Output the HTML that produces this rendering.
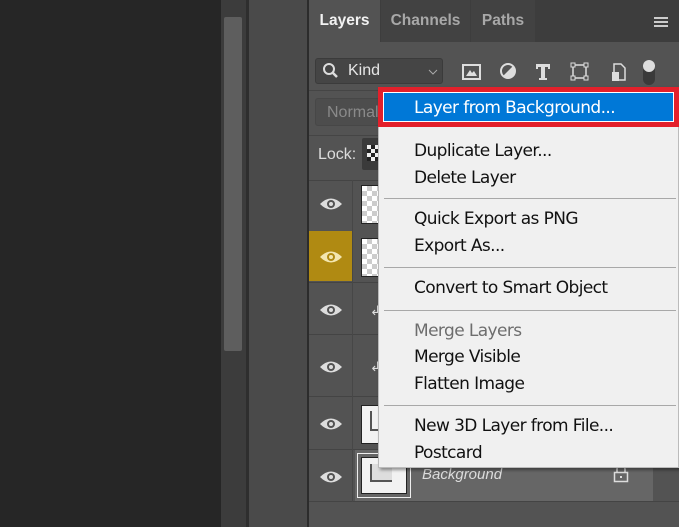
<!DOCTYPE html>
<html><head><style>
*{margin:0;padding:0;box-sizing:border-box}
body{width:679px;height:527px;overflow:hidden;background:#262626;position:relative;font-family:"Liberation Sans",sans-serif}
.a{position:absolute}
.tab{position:absolute;top:0;height:42px;font-weight:bold;font-size:15.5px;line-height:42px;text-align:center}
.mi{position:absolute;left:414px;font-size:17px;color:#111;line-height:20px;font-family:"DejaVu Sans","Liberation Sans",sans-serif;letter-spacing:-0.6px}
.sep{position:absolute;left:384px;width:292px;height:1px;background:#a8a8a8}
.row{position:absolute;left:309px;width:370px;border-top:1px solid #444}
.eyec{position:absolute;left:309px;width:44px;border-right:1px solid #474747}
.chk{position:absolute;background-color:#fff;background-image:linear-gradient(45deg,#ccc 25%,transparent 25%,transparent 75%,#ccc 75%),linear-gradient(45deg,#ccc 25%,transparent 25%,transparent 75%,#ccc 75%);background-size:10px 10px;background-position:0 0,5px 5px;border:1px solid #222}
</style></head><body>
<div class="a" style="left:221px;top:0;width:25px;height:527px;background:#3c3c3c"></div>
<div class="a" style="left:224px;top:17px;width:18px;height:334px;background:#5e5e5e;border-radius:2px"></div>
<div class="a" style="left:246px;top:0;width:3px;height:527px;background:#2e2e2e"></div>
<div class="a" style="left:249px;top:0;width:58px;height:527px;background:#4a4a4a"></div>
<div class="a" style="left:307px;top:0;width:2px;height:527px;background:#2c2c2c"></div>
<div class="a" style="left:309px;top:0;width:370px;height:527px;background:#535353"></div>
<div class="a" style="left:309px;top:0;width:370px;height:42px;background:#3d3d3d"></div>
<div class="tab" style="left:309px;width:71px;background:#535353;color:#f2f2f2">Layers</div>
<div class="tab" style="left:381px;width:89px;background:#424242;color:#a8a8a8">Channels</div>
<div class="tab" style="left:471px;width:64px;background:#424242;color:#a8a8a8">Paths</div>
<div class="a" style="left:654px;top:17px;width:14px;height:10px;border-top:2px solid #ccc;border-bottom:2px solid #ccc"></div>
<div class="a" style="left:654px;top:21px;width:14px;height:2px;background:#ccc"></div>
<div class="a" style="left:315px;top:58px;width:128px;height:26px;background:#454545;border:1px solid #3b3b3b;border-radius:3px"></div>
<svg class="a" style="left:322px;top:62px" width="18" height="18"><circle cx="7" cy="7" r="5" stroke="#ddd" stroke-width="2" fill="none"/><line x1="11" y1="11" x2="15" y2="15" stroke="#ddd" stroke-width="2.5"/></svg>
<div class="a" style="left:348px;top:62px;font-size:16px;color:#e6e6e6">Kind</div>
<svg class="a" style="left:428px;top:68px" width="10" height="8"><path d="M1 2 L5 6 L9 2" stroke="#aaa" fill="none"/></svg>
<svg class="a" style="left:462px;top:60px" width="200" height="26">
<rect x="1" y="5" width="17" height="14" fill="none" stroke="#ddd" stroke-width="2"/><path d="M4 16 L8 10 L10 13 L12 11 L15 16Z" fill="#ddd"/>
<circle cx="46" cy="11" r="7" fill="none" stroke="#ddd" stroke-width="2"/><path d="M41 16 L51 6 A7 7 0 0 1 41 16Z" fill="#ddd"/>
<path d="M74 4 H88 V9 H86 V7 H83 V18 H85 V20 H77 V18 H79 V7 H76 V9 H74Z" fill="#ddd"/>
<rect x="111" y="5" width="13" height="13" fill="none" stroke="#ddd" stroke-width="1.5"/><rect x="109" y="3" width="4" height="4" fill="#535353" stroke="#ddd"/><rect x="122" y="3" width="4" height="4" fill="#535353" stroke="#ddd"/><rect x="109" y="16" width="4" height="4" fill="#535353" stroke="#ddd"/><rect x="122" y="16" width="4" height="4" fill="#535353" stroke="#ddd"/>
<path d="M152 4 H159 L163 8 V20 H152Z" fill="none" stroke="#ddd" stroke-width="1.5"/><rect x="150" y="12" width="7" height="9" fill="#ddd"/>
<rect x="181" y="5" width="12" height="20" rx="6" fill="#3a3a3a"/><circle cx="187" cy="6" r="6" fill="#ddd"/>
</svg>
<div class="a" style="left:309px;top:90px;width:370px;height:1px;background:#454545"></div>
<div class="a" style="left:315px;top:98px;width:70px;height:28px;border:1px solid #474747;border-radius:3px;background:#4d4d4d"></div>
<div class="a" style="left:327px;top:104px;font-size:16px;color:#8a8a8a">Normal</div>
<div class="a" style="left:309px;top:135px;width:370px;height:1px;background:#454545"></div>
<div class="a" style="left:318px;top:146px;font-size:16px;color:#dcdcdc">Lock:</div>
<div class="a" style="left:362px;top:138px;width:30px;height:32px;background:#3a3a3a;border-radius:2px"></div>
<div class="chk" style="left:367px;top:145px;width:14px;height:16px;background-size:8px 8px;background-color:#eee;background-image:linear-gradient(45deg,#222 25%,transparent 25%,transparent 75%,#222 75%),linear-gradient(45deg,#222 25%,transparent 25%,transparent 75%,#222 75%);background-position:0 0,4px 4px;border:none"></div>
<div class="row" style="top:180px;height:51px"></div>
<div class="a" style="left:309px;top:231px;width:44px;height:50px;background:#b08a12"></div>
<div class="row" style="top:282px;height:52px"></div>
<div class="row" style="top:334px;height:62px"></div>
<div class="row" style="top:396px;height:53px"></div>
<div class="row" style="top:449px;height:53px;border-bottom:1px solid #444"></div>
<div class="a" style="left:355px;top:450px;width:298px;height:51px;background:#666"></div>
<div class="eyec" style="top:180px;height:322px"></div>
<svg class="a" style="left:309px;top:180px" width="44" height="322">
<g fill="#ddd">
<g transform="translate(22,24)"><path d="M-11 0 Q0 -11 11 0 Q0 11 -11 0Z"/><circle r="4" fill="#535353"/><circle r="2" fill="#ddd"/></g>
<g transform="translate(22,77)"><path d="M-11 0 Q0 -11 11 0 Q0 11 -11 0Z" fill="#f3e6b0"/><circle r="4" fill="#b08a12"/><circle r="2" fill="#f3e6b0"/></g>
<g transform="translate(22,130)"><path d="M-11 0 Q0 -11 11 0 Q0 11 -11 0Z"/><circle r="4" fill="#535353"/><circle r="2" fill="#ddd"/></g>
<g transform="translate(22,187)"><path d="M-11 0 Q0 -11 11 0 Q0 11 -11 0Z"/><circle r="4" fill="#535353"/><circle r="2" fill="#ddd"/></g>
<g transform="translate(22,244)"><path d="M-11 0 Q0 -11 11 0 Q0 11 -11 0Z"/><circle r="4" fill="#535353"/><circle r="2" fill="#ddd"/></g>
<g transform="translate(22,297)"><path d="M-11 0 Q0 -11 11 0 Q0 11 -11 0Z"/><circle r="4" fill="#535353"/><circle r="2" fill="#ddd"/></g>
</g></svg>
<div class="chk" style="left:361px;top:185px;width:44px;height:39px"></div>
<div class="chk" style="left:361px;top:238px;width:44px;height:39px"></div>
<div class="a" style="left:370px;top:303px;color:#ddd;font-size:13px">↲</div>
<div class="a" style="left:370px;top:359px;color:#ddd;font-size:13px">↲</div>
<div class="a" style="left:361px;top:405px;width:44px;height:39px;background:#f2f2f2;border:1px solid #222"></div>
<div class="a" style="left:370px;top:411px;width:14px;height:20px;border-left:2px solid #555;border-bottom:2px solid #555"></div>
<div class="a" style="left:357px;top:453px;width:54px;height:45px;border:1px solid #eee"></div>
<div class="a" style="left:361px;top:457px;width:46px;height:37px;background:#f2f2f2;border:1px solid #222"></div>
<div class="a" style="left:370px;top:464px;width:22px;height:18px;border-left:2px solid #555;border-bottom:2px solid #555;background:#ddd"></div>
<div class="a" style="left:422px;top:466px;font-size:15px;font-style:italic;color:#ddd">Background</div>
<svg class="a" style="left:613px;top:465px" width="16" height="18"><path d="M4 7 V4 A4 4 0 0 1 12 4 V7" stroke="#ddd" stroke-width="1.5" fill="none"/><rect x="1.5" y="7.5" width="13" height="9" fill="none" stroke="#ddd" stroke-width="1.5"/><rect x="7" y="11" width="2" height="2" fill="#ddd"/></svg>
<div class="a" style="left:378px;top:87px;width:301px;height:381px;background:#f0f0f0;border:1px solid #bbb;box-shadow:2px 2px 3px rgba(0,0,0,.4)"></div>
<div class="a" style="left:378px;top:87px;width:301px;height:40px;border:5px solid #e3202b;background:#fff"></div>
<div class="a" style="left:384px;top:93px;width:289px;height:28px;background:#0078d7"></div>
<div class="mi" style="top:98px;color:#fff">Layer from Background...</div>
<div class="mi" style="top:141px">Duplicate Layer...</div>
<div class="mi" style="top:168px">Delete Layer</div>
<div class="sep" style="top:198px"></div>
<div class="mi" style="top:209px">Quick Export as PNG</div>
<div class="mi" style="top:236px">Export As...</div>
<div class="sep" style="top:267px"></div>
<div class="mi" style="top:278px">Convert to Smart Object</div>
<div class="sep" style="top:310px"></div>
<div class="mi" style="top:321px;color:#6d6d6d">Merge Layers</div>
<div class="mi" style="top:347px">Merge Visible</div>
<div class="mi" style="top:374px">Flatten Image</div>
<div class="sep" style="top:405px"></div>
<div class="mi" style="top:416px">New 3D Layer from File...</div>
<div class="mi" style="top:443px">Postcard</div>
</body></html>
